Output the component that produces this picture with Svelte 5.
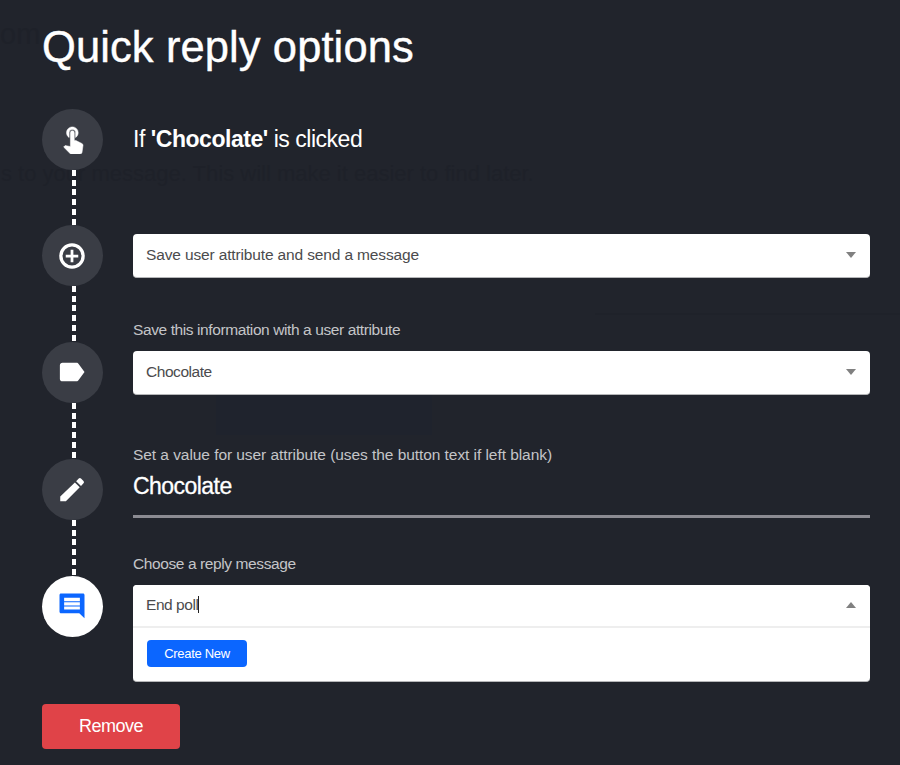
<script>
  // quick reply dialog: a timeline of steps next to the form fields
  const steps = [
    { icon: "touch" },
    { icon: "add" },
    { icon: "label" },
    { icon: "edit" },
    { icon: "message", active: true },
  ];

  const paths = {
    touch:
      "M9 11.24V7.5a2.5 2.5 0 0 1 5 0v3.74c1.21-.81 2-2.18 2-3.74C16 5.01 13.99 3 11.5 3S7 5.01 7 7.5c0 1.56.79 2.93 2 3.74zm9.84 4.63-4.54-2.26c-.17-.07-.35-.11-.54-.11H13v-6a1.5 1.5 0 0 0-3 0v10.74l-3.43-.72c-.08-.01-.15-.03-.24-.03-.31 0-.59.13-.79.33l-.79.8 4.94 4.94c.27.27.65.44 1.06.44h6.79c.75 0 1.33-.55 1.44-1.28l.75-5.27c.01-.07.02-.14.02-.2 0-.62-.38-1.16-.91-1.38z",
    add: "M13.1 7h-2.2v3.9H7v2.2h3.9V17h2.2v-3.9H17v-2.2h-3.9V7zM12 1.8a10.2 10.2 0 1 0 0 20.4 10.2 10.2 0 0 0 0-20.4zm0 17.8a7.6 7.6 0 1 1 0-15.2 7.6 7.6 0 0 1 0 15.2z",
    label:
      "M17.3 5.6C16.9 5 16.3 4.6 15.6 4.6H4.4C3.2 4.6 2.3 5.4 2.3 6.5v11c0 1.1.9 1.9 2.1 1.9h11.2c.7 0 1.3-.4 1.7-1L22 12l-4.7-6.4z",
    edit: "M2.6 17.9v3.9h4.5L18.2 10.6l-3.9-3.9L2.6 17.9zM21.2 7.4a1.3 1.3 0 0 0 0-1.8l-2-2a1.3 1.3 0 0 0-1.8 0l-2.1 2.1 3.9 3.9 2-2.2z",
    message:
      "M22 3.2c0-.7-.5-1.2-1.2-1.2H3.2C2.5 2 2 2.5 2 3.2v13.4c0 .7.5 1.2 1.2 1.2h14.6l4.2 4zM5.7 5.4h12.6v2.7H5.7zm0 3.6h12.6v2.5H5.7zm0 3.4h12.6v2.4H5.7z",
  };

  let buttonText = "Chocolate";
</script>

<div class="dialog">
  <!-- dimmed page behind the dialog -->
  <div class="backdrop" aria-hidden="true">
    <span class="page-title">om</span>
    <span class="page-text">s to your message. This will make it easier to find later.</span>
    <span class="page-button"></span>
    <span class="page-line"></span>
  </div>

  <h1>Quick reply options</h1>

  <div class="body">
    <div class="timeline">
      {#each steps as step, i}
        {#if i > 0}
          <div class="connector"></div>
        {/if}
        <div class="dot" class:active={step.active}>
          <svg class={step.icon} viewBox="0 0 24 24">
            <path fill-rule="evenodd" d={paths[step.icon]} />
          </svg>
        </div>
      {/each}
    </div>

    <div class="fields">
      <p class="trigger">If <b>'{buttonText}'</b> is clicked</p>

      <div class="select">
        <span class="action">Save user attribute and send a message</span>
        <i class="arrow"></i>
      </div>

      <p class="label save">Save this information with a user attribute</p>
      <div class="select">
        <span>{buttonText}</span>
        <i class="arrow"></i>
      </div>

      <p class="label value">Set a value for user attribute (uses the button text if left blank)</p>
      <div class="input">{buttonText}</div>

      <p class="label reply">Choose a reply message</p>
      <div class="dropdown">
        <div class="search">
          <span>End poll<i class="caret"></i></span>
          <i class="arrow up"></i>
        </div>
        <div class="options">
          <button class="create">Create New</button>
        </div>
      </div>
    </div>
  </div>

  <button class="remove">Remove</button>
</div>

<style>
  :global(body) {
    background: #21242c;
  }

  .dialog {
    position: relative;
    z-index: 0;
    box-sizing: border-box;
    width: 900px;
    height: 765px;
    padding: 17px 30px 0 42px;
    overflow: hidden;
    background: #21242c;
    color: #fff;
    font-family: "Liberation Sans", Arial, sans-serif;
  }

  .backdrop {
    position: absolute;
    inset: 0;
    z-index: -1;
    color: #1e2129;
    white-space: nowrap;
  }

  .backdrop span {
    position: absolute;
  }

  .page-title {
    top: 18px;
    left: 0;
    font-size: 29px;
  }

  .page-text {
    top: 161px;
    left: 1px;
    font-size: 22px;
  }

  .page-button {
    top: 395px;
    left: 216px;
    width: 216px;
    height: 40px;
    background: #1f232d;
  }

  .page-line {
    top: 313px;
    left: 595px;
    width: 305px;
    height: 2px;
    background: #1f222a;
  }

  h1,
  p {
    margin: 0;
  }

  h1 {
    height: 91.5px;
    font-size: 43.5px;
    font-weight: 400;
    letter-spacing: 0.1px;
    line-height: 61px;
    white-space: nowrap;
    -webkit-text-stroke: 0.4px #fff;
  }

  .body {
    display: flex;
    gap: 30px;
    height: 595.5px;
  }

  .timeline {
    display: flex;
    flex: 0 0 61px;
    flex-direction: column;
    align-items: center;
  }

  .dot {
    display: flex;
    flex: 0 0 61px;
    align-items: center;
    justify-content: center;
    width: 61px;
    border-radius: 50%;
    background: #3a3d45;
  }

  .dot.active {
    background: #fff;
  }

  .dot svg {
    width: 30px;
    height: 30px;
    margin: 0 1px 0 0;
    fill: #fff;
  }

  .dot .touch {
    width: 32px;
    height: 31px;
    margin: 0 0 2px;
    stroke: #fff;
    stroke-width: 0.4;
  }

  .dot .label {
    margin-bottom: 1px;
  }

  .dot.active svg {
    fill: #0b66ff;
  }

  .connector {
    flex: 0 0 55.8px;
    width: 4px;
    margin-left: 2px;
    background: repeating-linear-gradient(#fff 0 6px, transparent 6px 9.7px);
  }

  .fields {
    flex: 1;
    min-width: 0;
  }

  .trigger {
    height: 125.5px;
    font-size: 23px;
    letter-spacing: -0.47px;
    line-height: 60px;
  }

  .select,
  .search {
    display: flex;
    align-items: center;
    justify-content: space-between;
    box-sizing: border-box;
    height: 44px;
    padding: 0 14px 1px 13px;
    border-bottom: 1px solid #b5b6b8;
    border-radius: 4px;
    background: #fff;
    color: #4b4b4d;
    font-size: 15.5px;
    letter-spacing: -0.45px;
  }

  .select .action {
    letter-spacing: -0.14px;
  }

  .arrow {
    border: 5.5px solid transparent;
    border-top: 6px solid #808080;
    border-bottom: 0;
  }

  .arrow.up {
    border-top: 0;
    border-bottom: 6px solid #808080;
  }

  p.label {
    color: #c4c5c8;
    font-size: 15.5px;
    letter-spacing: -0.4px;
    line-height: 20px;
    white-space: nowrap;
  }

  .save {
    padding: 42px 0 11px;
  }

  .value {
    padding: 50px 0 0;
  }

  p.value {
    letter-spacing: -0.06px;
  }

  .input {
    box-sizing: border-box;
    height: 53px;
    border-bottom: 3px solid #8b8b92;
    font-size: 23px;
    letter-spacing: -0.55px;
    line-height: 42px;
    -webkit-text-stroke: 0.3px #fff;
  }

  .reply {
    padding: 36px 0 11px;
  }

  .dropdown {
    box-sizing: border-box;
    height: 97px;
    border-bottom: 1px solid #b5b6b8;
    border-radius: 4px;
    background: #fff;
  }

  .search {
    height: 43px;
    padding-bottom: 2px;
    border-bottom: 2px solid #eee;
    border-radius: 4px 4px 0 0;
  }

  .caret {
    display: inline-block;
    width: 1px;
    height: 17px;
    background: #222;
    vertical-align: -3px;
  }

  .options {
    padding: 12px 14px;
  }

  button {
    display: block;
    padding: 0;
    border: 0;
    border-radius: 4px;
    color: #fff;
    font-family: inherit;
  }

  .create {
    width: 100px;
    height: 27px;
    background: #0b66ff;
    font-size: 13px;
    letter-spacing: -0.3px;
  }

  .remove {
    width: 138px;
    height: 45px;
    background: #e04348;
    font-size: 18px;
    letter-spacing: -0.5px;
  }
</style>
